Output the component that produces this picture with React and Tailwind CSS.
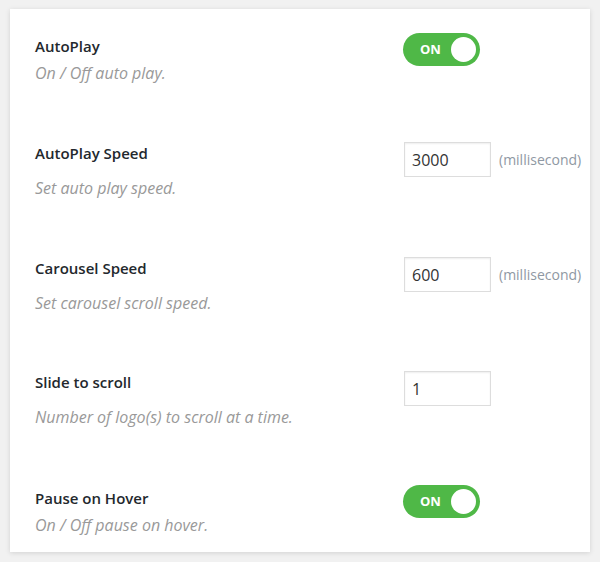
import React from "react";

function Toggle() {
  return (
    <div className="flex h-[33px] w-[77px] items-center justify-between rounded-full bg-[#4fb847] pl-[17px] pr-[4px]">
      <span className="text-[13px] font-bold text-white">ON</span>
      <span className="h-[25px] w-[25px] rounded-full bg-white" />
    </div>
  );
}

function NumberField({ value, unit }) {
  return (
    <div className="flex items-center">
      <input
        type="text"
        defaultValue={value}
        className="h-[35px] w-[87px] border border-[#dddddd] bg-white px-[7px] text-[16px] text-[#333] shadow-[inset_0_1px_2px_rgba(0,0,0,0.07)] outline-none"
      />
      {unit && <span className="ml-[8px] text-[14px] text-[#8f98a3]">{unit}</span>}
    </div>
  );
}

const rows = [
  { label: "AutoPlay", desc: "On / Off auto play.", type: "toggle", mt: "mt-0" },
  { label: "AutoPlay Speed", desc: "Set auto play speed.", type: "number", value: "3000", unit: "(millisecond)", mt: "mt-[59px]" },
  { label: "Carousel Speed", desc: "Set carousel scroll speed.", type: "number", value: "600", unit: "(millisecond)", mt: "mt-[59px]" },
  { label: "Slide to scroll", desc: "Number of logo(s) to scroll at a time.", type: "number", value: "1", mt: "mt-[58px]" },
  { label: "Pause on Hover", desc: "On / Off pause on hover.", type: "toggle", mt: "mt-[58px]" },
];

export default function App() {
  return (
    <div className="h-[562px] w-[600px] bg-[#f1f1f1] pl-[10px] pt-[9px]" style={{ fontFamily: '"Open Sans", sans-serif' }}>
      <div className="h-[543px] w-[580px] bg-white pl-[25px] pt-[24px] shadow-[0_1px_5px_rgba(0,0,0,0.13)]">
        {rows.map((r) => (
          <div key={r.label} className={`flex ${r.mt}`}>
            <div className="w-[368px]">
              {r.type === "toggle" ? (
                <>
                  <div className="mt-[3px] text-[15px] font-semibold leading-[20px] text-[#23282d]">{r.label}</div>
                  <div className="mt-[7px] text-[16px] italic leading-[20px] text-[#999]">{r.desc}</div>
                </>
              ) : (
                <>
                  <div className="mt-[1px] text-[15px] font-semibold leading-[20px] text-[#23282d]">{r.label}</div>
                  <div className="mt-[15px] text-[16px] italic leading-[20px] text-[#999]">{r.desc}</div>
                </>
              )}
            </div>
            <div className={r.type === "toggle" ? "" : "pl-[1px]"}>
              {r.type === "toggle" ? <Toggle /> : <NumberField value={r.value} unit={r.unit} />}
            </div>
          </div>
        ))}
      </div>
    </div>
  );
}
